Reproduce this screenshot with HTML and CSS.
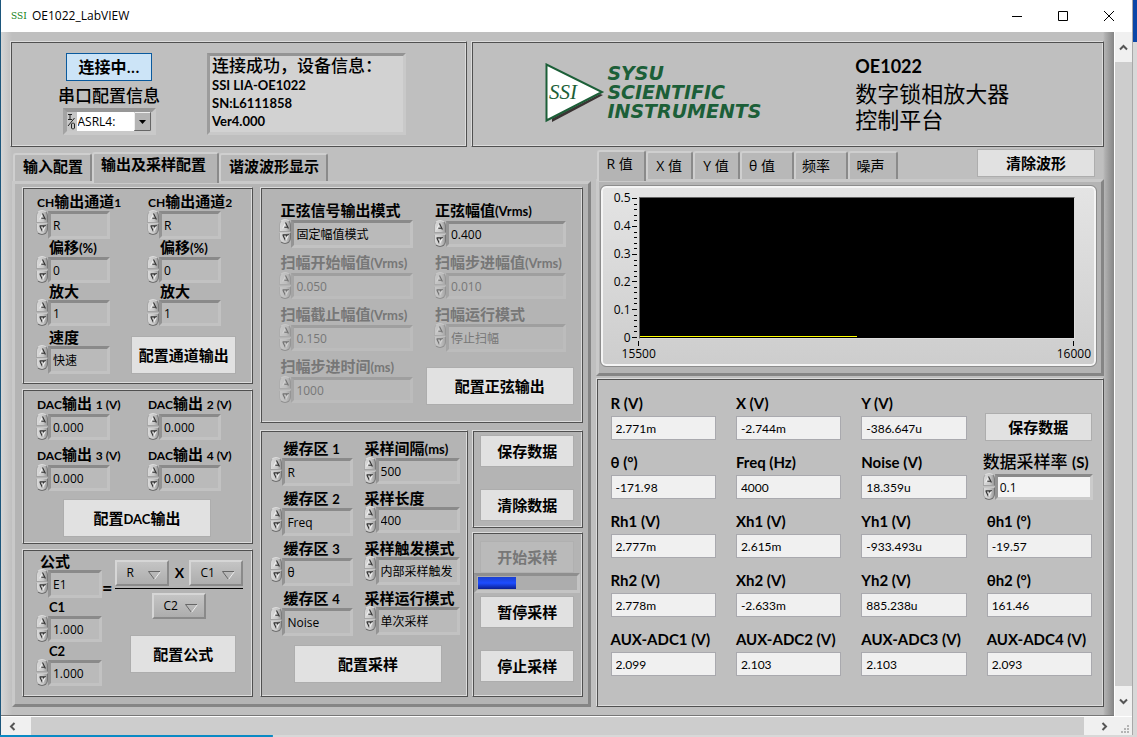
FILE: index.html
```html
<!DOCTYPE html>
<html lang="zh-CN">
<head>
<meta charset="utf-8">
<title>OE1022_LabVIEW</title>
<link rel="stylesheet" href="styles.css">
</head>
<body>
<svg class="defs" aria-hidden="true">
  <symbol id="up" viewBox="0 0 6 6"><path d="M.5 5.500 3 .8" stroke="#eee" fill="none"/><path d="M3 .5 5.500 5.500M2 4.500h3" stroke="#333" fill="none"/></symbol>
  <symbol id="down" viewBox="0 0 6 6"><path d="M.5 .8h5L3.500 2M.8 1 3 5.500" stroke="#333" fill="none"/><path d="M5.500 1 3 5.500" stroke="#eee" fill="none"/></symbol>
</svg>
<div class="desktop">
<div class="window">
  <header class="titlebar">
    <span class="app-icon">SSI</span>
    <span class="app-name">OE1022_LabVIEW</span>
    <button class="win-btn" aria-label="最小化"><svg width="12" height="12"><path d="M1 6.500h10" stroke="#000"/></svg></button>
    <button class="win-btn" aria-label="最大化"><svg width="12" height="12"><path d="M1.500 1.500h9v9h-9z" stroke="#000" fill="none"/></svg></button>
    <button class="win-btn" aria-label="关闭"><svg width="12" height="12"><path d="M1 1l10 10M11 1 1 11" stroke="#000"/></svg></button>
  </header>

  <div class="viewport">
  <main class="pane">
    <div class="top-row">
      <section class="frame connect">
        <div class="port">
          <button class="btn-connect">连接中...</button>
          <label for="port" class="port-label">串口配置信息</label>
          <div class="port-box">
            <svg width="9" height="17" aria-hidden="true"><path d="M1 1.500h4M3 1.500v5M1 6.500h4M7.500 5 1 13M4.500 11v4l1 1h1l1-1v-4l-1-1h-1z" stroke="#222" fill="none"/></svg>
            <select id="port"><option>ASRL4:</option></select>
          </div>
        </div>
        <div class="device-info">
          <p class="info-head">连接成功，设备信息：</p>
          <p>SSI LIA-OE1022</p>
          <p>SN:L6111858</p>
          <p>Ver4.000</p>
        </div>
      </section>
      <section class="frame brand">
        <div class="logo">
          <svg width="60" height="60" viewBox="0 0 60 60" aria-label="SSI">
            <path d="M7 55.500V59l51-27-3-1z" fill="#3a3333"/>
            <path d="M1.500 1.500v56L57 29z" fill="#fff" stroke="#1c5f38" stroke-width="2"/>
            <text x="4" y="36" class="logo-mark">SSI</text>
          </svg>
          <div class="logo-text">SYSU<br>SCIENTIFIC<br>INSTRUMENTS</div>
        </div>
        <div class="product">
          <strong>OE1022</strong>
          <span>数字锁相放大器</span>
          <span>控制平台</span>
        </div>
      </section>
    </div>

    <div class="work">
      <section class="left">
        <div class="tabs" role="tablist">
          <button role="tab" class="tab strong">输入配置</button>
          <button role="tab" class="tab strong active" aria-selected="true">输出及采样配置</button>
          <button role="tab" class="tab strong">谐波波形显示</button>
        </div>
        <div class="panel config">
          <div class="col col-a">
            <section class="frame channel">
              <div class="pair">
                <div class="field enum flush"><label for="ch1"><span>CH</span>输出通道<span>1</span></label><div class="spin"><button aria-label="增加"><svg><use href="#up"/></svg></button><button aria-label="减少"><svg><use href="#down"/></svg></button></div><input id="ch1" value="R"></div>
                <div class="field enum flush"><label for="ch2"><span>CH</span>输出通道<span>2</span></label><div class="spin"><button aria-label="增加"><svg><use href="#up"/></svg></button><button aria-label="减少"><svg><use href="#down"/></svg></button></div><input id="ch2" value="R"></div>
                <div class="field"><label for="off1">偏移<span>(%)</span></label><div class="spin"><button aria-label="增加"><svg><use href="#up"/></svg></button><button aria-label="减少"><svg><use href="#down"/></svg></button></div><input id="off1" value="0"></div>
                <div class="field"><label for="off2">偏移<span>(%)</span></label><div class="spin"><button aria-label="增加"><svg><use href="#up"/></svg></button><button aria-label="减少"><svg><use href="#down"/></svg></button></div><input id="off2" value="0"></div>
                <div class="field"><label for="amp1">放大</label><div class="spin"><button aria-label="增加"><svg><use href="#up"/></svg></button><button aria-label="减少"><svg><use href="#down"/></svg></button></div><input id="amp1" value="1"></div>
                <div class="field"><label for="amp2">放大</label><div class="spin"><button aria-label="增加"><svg><use href="#up"/></svg></button><button aria-label="减少"><svg><use href="#down"/></svg></button></div><input id="amp2" value="1"></div>
              </div>
              <div class="speed">
                <div class="field enum"><label for="speed">速度</label><div class="spin"><button aria-label="增加"><svg><use href="#up"/></svg></button><button aria-label="减少"><svg><use href="#down"/></svg></button></div><input id="speed" value="快速"></div>
                <button class="btn tall">配置通道输出</button>
              </div>
            </section>

            <section class="frame dac">
              <div class="pair">
                <div class="field flush"><label for="dac1"><span>DAC</span>输出 <span>1 (V)</span></label><div class="spin"><button aria-label="增加"><svg><use href="#up"/></svg></button><button aria-label="减少"><svg><use href="#down"/></svg></button></div><input id="dac1" value="0.000"></div>
                <div class="field flush"><label for="dac2"><span>DAC</span>输出 <span>2 (V)</span></label><div class="spin"><button aria-label="增加"><svg><use href="#up"/></svg></button><button aria-label="减少"><svg><use href="#down"/></svg></button></div><input id="dac2" value="0.000"></div>
                <div class="field flush"><label for="dac3"><span>DAC</span>输出 <span>3 (V)</span></label><div class="spin"><button aria-label="增加"><svg><use href="#up"/></svg></button><button aria-label="减少"><svg><use href="#down"/></svg></button></div><input id="dac3" value="0.000"></div>
                <div class="field flush"><label for="dac4"><span>DAC</span>输出 <span>4 (V)</span></label><div class="spin"><button aria-label="增加"><svg><use href="#up"/></svg></button><button aria-label="减少"><svg><use href="#down"/></svg></button></div><input id="dac4" value="0.000"></div>
              </div>
              <button class="btn tall wide">配置<span>DAC</span>输出</button>
            </section>

            <section class="frame formula">
              <div class="terms">
                <div class="field enum flush"><label for="eq">公式</label><div class="spin"><button aria-label="增加"><svg><use href="#up"/></svg></button><button aria-label="减少"><svg><use href="#down"/></svg></button></div><input id="eq" value="E1"></div>
                <div class="field"><label for="c1"><span>C1</span></label><div class="spin"><button aria-label="增加"><svg><use href="#up"/></svg></button><button aria-label="减少"><svg><use href="#down"/></svg></button></div><input id="c1" value="1.000"></div>
                <div class="field"><label for="c2"><span>C2</span></label><div class="spin"><button aria-label="增加"><svg><use href="#up"/></svg></button><button aria-label="减少"><svg><use href="#down"/></svg></button></div><input id="c2" value="1.000"></div>
              </div>
              <div class="expression">
                <div class="equation">
                  <b class="sign equals">=</b>
                  <div class="fraction">
                    <div class="numerator">
                      <select class="ring" aria-label="分子一"><option>R</option></select>
                      <b class="sign">X</b>
                      <select class="ring" aria-label="分子二"><option>C1</option></select>
                    </div>
                    <select class="ring" aria-label="分母"><option>C2</option></select>
                  </div>
                </div>
                <button class="btn tall">配置公式</button>
              </div>
            </section>
          </div>

          <div class="col col-b">
            <section class="frame sine">
              <div class="field enum flush"><label for="s1">正弦信号输出模式</label><div class="spin"><button aria-label="增加"><svg><use href="#up"/></svg></button><button aria-label="减少"><svg><use href="#down"/></svg></button></div><input id="s1" value="固定幅值模式"></div>
              <div class="field flush"><label for="s2">正弦幅值<span>(Vrms)</span></label><div class="spin"><button aria-label="增加"><svg><use href="#up"/></svg></button><button aria-label="减少"><svg><use href="#down"/></svg></button></div><input id="s2" value="0.400"></div>
              <div class="field flush off"><label for="s3">扫幅开始幅值<span>(Vrms)</span></label><div class="spin"><button disabled aria-label="增加"><svg><use href="#up"/></svg></button><button disabled aria-label="减少"><svg><use href="#down"/></svg></button></div><input disabled id="s3" value="0.050"></div>
              <div class="field flush off"><label for="s4">扫幅步进幅值<span>(Vrms)</span></label><div class="spin"><button disabled aria-label="增加"><svg><use href="#up"/></svg></button><button disabled aria-label="减少"><svg><use href="#down"/></svg></button></div><input disabled id="s4" value="0.010"></div>
              <div class="field flush off"><label for="s5">扫幅截止幅值<span>(Vrms)</span></label><div class="spin"><button disabled aria-label="增加"><svg><use href="#up"/></svg></button><button disabled aria-label="减少"><svg><use href="#down"/></svg></button></div><input disabled id="s5" value="0.150"></div>
              <div class="field enum flush off"><label for="s6">扫幅运行模式</label><div class="spin"><button disabled aria-label="增加"><svg><use href="#up"/></svg></button><button disabled aria-label="减少"><svg><use href="#down"/></svg></button></div><input disabled id="s6" value="停止扫幅"></div>
              <div class="field flush off"><label for="s7">扫幅步进时间<span>(ms)</span></label><div class="spin"><button disabled aria-label="增加"><svg><use href="#up"/></svg></button><button disabled aria-label="减少"><svg><use href="#down"/></svg></button></div><input disabled id="s7" value="1000"></div>
              <button class="btn tall wide">配置正弦输出</button>
            </section>

            <div class="lower">
              <section class="frame sampling">
                <div class="sample-grid">
                  <div class="field enum"><label for="b1">缓存区 <span>1</span></label><div class="spin"><button aria-label="增加"><svg><use href="#up"/></svg></button><button aria-label="减少"><svg><use href="#down"/></svg></button></div><input id="b1" value="R"></div>
                  <div class="field flush"><label for="p1">采样间隔<span>(ms)</span></label><div class="spin"><button aria-label="增加"><svg><use href="#up"/></svg></button><button aria-label="减少"><svg><use href="#down"/></svg></button></div><input id="p1" value="500"></div>
                  <div class="field enum"><label for="b2">缓存区 <span>2</span></label><div class="spin"><button aria-label="增加"><svg><use href="#up"/></svg></button><button aria-label="减少"><svg><use href="#down"/></svg></button></div><input id="b2" value="Freq"></div>
                  <div class="field flush"><label for="p2">采样长度</label><div class="spin"><button aria-label="增加"><svg><use href="#up"/></svg></button><button aria-label="减少"><svg><use href="#down"/></svg></button></div><input id="p2" value="400"></div>
                  <div class="field enum"><label for="b3">缓存区 <span>3</span></label><div class="spin"><button aria-label="增加"><svg><use href="#up"/></svg></button><button aria-label="减少"><svg><use href="#down"/></svg></button></div><input id="b3" value="θ"></div>
                  <div class="field enum flush"><label for="p3">采样触发模式</label><div class="spin"><button aria-label="增加"><svg><use href="#up"/></svg></button><button aria-label="减少"><svg><use href="#down"/></svg></button></div><input id="p3" value="内部采样触发"></div>
                  <div class="field enum"><label for="b4">缓存区 <span>4</span></label><div class="spin"><button aria-label="增加"><svg><use href="#up"/></svg></button><button aria-label="减少"><svg><use href="#down"/></svg></button></div><input id="b4" value="Noise"></div>
                  <div class="field enum flush"><label for="p4">采样运行模式</label><div class="spin"><button aria-label="增加"><svg><use href="#up"/></svg></button><button aria-label="减少"><svg><use href="#down"/></svg></button></div><input id="p4" value="单次采样"></div>
                </div>
                <button class="btn tall wide">配置采样</button>
              </section>
              <div class="actions">
                <section class="frame data-actions">
                  <button class="btn">保存数据</button>
                  <button class="btn">清除数据</button>
                </section>
                <section class="frame run-actions">
                  <button class="btn" disabled>开始采样</button>
                  <div class="progress" role="progressbar" aria-label="采样进度" aria-valuenow="39"><div class="progress-fill" style="width:39%"></div></div>
                  <button class="btn pause">暂停采样</button>
                  <button class="btn">停止采样</button>
                </section>
              </div>
            </div>
          </div>
        </div>
      </section>

      <section class="right">
        <div class="tabs" role="tablist">
          <button role="tab" class="tab active" aria-selected="true">R 值</button>
          <button role="tab" class="tab">X 值</button>
          <button role="tab" class="tab">Y 值</button>
          <button role="tab" class="tab wider">θ 值</button>
          <button role="tab" class="tab">频率</button>
          <button role="tab" class="tab">噪声</button>
          <button class="btn clear">清除波形</button>
        </div>
        <div class="panel chart-panel">
          <div class="chart">
            <div class="y-axis"><span>0.5</span><span>0.4</span><span>0.3</span><span>0.2</span><span>0.1</span><span>0</span></div>
            <svg class="ticks" width="6" height="142" aria-hidden="true"><path stroke="#000" d="M0 1.500h5M0 29.500h5M0 57.500h5M0 84.500h5M0 112.500h5M0 140.500h5M2 7.500h3M2 12.500h3M2 18.500h3M2 23.500h3M2 35.500h3M2 40.500h3M2 46.500h3M2 51.500h3M2 63.500h3M2 68.500h3M2 74.500h3M2 79.500h3M2 90.500h3M2 95.500h3M2 101.500h3M2 106.500h3M2 118.500h3M2 123.500h3M2 129.500h3M2 134.500h3"/></svg>
            <div class="plot"><div class="trace"></div></div>
            <div class="x-axis"><span>15500</span><span>16000</span></div>
          </div>
        </div>
        <section class="frame readings">
          <div class="reading"><label for="r1">R (V)</label><input id="r1" readonly value="2.771m"></div>
          <div class="reading"><label for="r2">X (V)</label><input id="r2" readonly value="-2.744m"></div>
          <div class="reading"><label for="r3">Y (V)</label><input id="r3" readonly value="-386.647u"></div>
          <button class="btn save">保存数据</button>
          <div class="reading"><label for="r4">θ (°)</label><input id="r4" readonly value="-171.98"></div>
          <div class="reading"><label for="r5">Freq (Hz)</label><input id="r5" readonly value="4000"></div>
          <div class="reading"><label for="r6">Noise (V)</label><input id="r6" readonly value="18.359u"></div>
          <div class="field rate"><label for="rate">数据采样率 <span>(S)</span></label><div class="spin"><button aria-label="增加"><svg><use href="#up"/></svg></button><button aria-label="减少"><svg><use href="#down"/></svg></button></div><input id="rate" value="0.1"></div>
          <div class="reading"><label for="r7">Rh1 (V)</label><input id="r7" readonly value="2.777m"></div>
          <div class="reading"><label for="r8">Xh1 (V)</label><input id="r8" readonly value="2.615m"></div>
          <div class="reading"><label for="r9">Yh1 (V)</label><input id="r9" readonly value="-933.493u"></div>
          <div class="reading"><label for="r10">θh1 (°)</label><input id="r10" readonly value="-19.57"></div>
          <div class="reading"><label for="r11">Rh2 (V)</label><input id="r11" readonly value="2.778m"></div>
          <div class="reading"><label for="r12">Xh2 (V)</label><input id="r12" readonly value="-2.633m"></div>
          <div class="reading"><label for="r13">Yh2 (V)</label><input id="r13" readonly value="885.238u"></div>
          <div class="reading"><label for="r14">θh2 (°)</label><input id="r14" readonly value="161.46"></div>
          <div class="reading"><label for="r15">AUX-ADC1 (V)</label><input id="r15" readonly value="2.099"></div>
          <div class="reading"><label for="r16">AUX-ADC2 (V)</label><input id="r16" readonly value="2.103"></div>
          <div class="reading"><label for="r17">AUX-ADC3 (V)</label><input id="r17" readonly value="2.103"></div>
          <div class="reading"><label for="r18">AUX-ADC4 (V)</label><input id="r18" readonly value="2.093"></div>
        </section>
      </section>
    </div>
  </main>
  <div class="vscroll">
    <button aria-label="向上滚动"><svg width="9" height="9"><path d="M1 6.500 4.500 3 8 6.500" stroke="#555" stroke-width="2" fill="none"/></svg></button>
    <div class="thumb"></div>
    <button aria-label="向下滚动"><svg width="9" height="9"><path d="M1 2.500 4.500 6 8 2.500" stroke="#555" stroke-width="2" fill="none"/></svg></button>
  </div>
  </div>
  <div class="hscroll">
    <button aria-label="向左滚动"><svg width="9" height="9"><path d="M6.500 1 3 4.500 6.500 8" stroke="#555" stroke-width="2" fill="none"/></svg></button>
    <div class="thumb"></div>
    <button aria-label="向右滚动"><svg width="9" height="9"><path d="M2.500 1 6 4.500 2.500 8" stroke="#555" stroke-width="2" fill="none"/></svg></button>
    <svg class="grip" width="9" height="9" aria-hidden="true"><path fill="#b4b4b4" d="M6 0h2v2h-2zM3 3h2v2h-2zM6 3h2v2h-2zM0 6h2v2h-2zM3 6h2v2h-2zM6 6h2v2h-2z"/></svg>
  </div>
</div>
</div>
</body>
</html>
```
FILE: styles.css
```css
* { box-sizing: border-box; }
body { margin: 0; color: #000; font: 12px/16px "Open Sans", "Noto Sans CJK SC", sans-serif; }
button, input, select { margin: 0; padding: 0; border: 0; border-radius: 0; color: inherit; font: inherit; background: none; appearance: none; }
p { margin: 0; }
.defs { position: absolute; width: 0; height: 0; }

.desktop { display: flex; min-height: 100vh; padding: 0 4px 2px 0;
  background: linear-gradient(#0a8ac4, #0a8ac4) left bottom / 24% 2px no-repeat, linear-gradient(#0a46a8 42px, #d8d8d8 42px); }
.window { flex: 1; display: flex; flex-direction: column; min-width: 0; border-left: 1px solid #1c567c; border-right: 1px solid #a8a8a8; background: #fff; }

.titlebar { display: flex; align-items: center; height: 32px; padding-left: 10px; background: #fff; }
.app-icon { width: 21px; color: #138013; font: 9px/16px "DejaVu Serif", serif; }
.app-name { flex: 1; }
.win-btn { display: grid; place-items: center; width: 46px; height: 32px; }

.viewport { flex: 1; display: flex; }
.pane { flex: 1; display: flex; flex-direction: column; gap: 4px; min-width: 0; padding: 9px 10px 8px 9px; border-bottom: 1px solid #777;
  background: linear-gradient(90deg, #d6d6d6, #bfbfbf 11px, #bfbfbf calc(100% - 11px), #b0b0b0 calc(100% - 9px), #858585); }

.frame { border: 1px solid; border-color: #dcdcdc #505050 #505050 #dcdcdc; box-shadow: inset 1px 1px #505050, inset -1px -1px #dcdcdc; padding: 1px; min-width: 0; }

.top-row { display: grid; grid-template-columns: 457fr 632fr; gap: 4px; height: 106px; }
.connect { display: flex; gap: 46px; padding: 11px 60px 11px 46px; }
.port { display: flex; flex-direction: column; align-items: center; width: 104px; }
.btn-connect { width: 86px; height: 28px; border: 1px solid #0a5a9e; background: #cce4f7; font-size: 16px; font-weight: 600; }
.port-label { font-size: 17px; line-height: 18px; font-weight: 500; margin: 6px 0 3px; white-space: nowrap; }
.port-box { display: flex; align-items: center; gap: 1px; width: 93px; height: 27px; padding-right: 1px; border: 4px solid; border-color: #979797 #c9c9c9 #c9c9c9 #a3a3a3; background: #c6c6c6; }
.port-box svg { flex: none; }
.port-box select { flex: 1; min-width: 0; height: 19px; padding-left: 1px; font-size: 12px;
  background: #fff url("data:image/svg+xml,%3Csvg xmlns='http://www.w3.org/2000/svg' width='17' height='19'%3E%3Cpath fill='%23b4b4b4' stroke='%23666' d='M.5 .5h16v18H.5z'/%3E%3Cpath stroke='%23eee' fill='none' d='M.5 18V.5H16'/%3E%3Cpath d='M5 8h7l-3.500 4z'/%3E%3C/svg%3E") right center no-repeat; }
.device-info { flex: 0 1 199px; height: 82px; padding: 0 2px; border: 3px solid; border-color: #949494 #c9c9c9 #c9c9c9 #9c9c9c; background: #d2d2d2; font: bold 13px/18px Lato, "Noto Sans CJK SC", sans-serif; white-space: nowrap; }
.info-head { font-size: 17px; font-weight: 500; line-height: 20px; }

.brand { display: grid; grid-template-columns: 384fr 248fr; }
.logo { display: flex; align-items: center; gap: 2px; padding: 0 0 3px 72px; }
.logo-mark { font: italic 21px "Liberation Serif", serif; fill: #1c5f38; }
.logo-text { color: #1c5f38; font: italic bold 19px/19px "DejaVu Sans", sans-serif; white-space: nowrap; }
.product { display: flex; flex-direction: column; justify-content: center; padding-bottom: 4px; font: 22px/26px "Noto Sans CJK SC", sans-serif; white-space: nowrap; }
.product strong { font: bold 18px/26px Lato, sans-serif; }

.work { flex: 1; display: grid; grid-template-columns: 580fr 508fr; gap: 5px; }
.left, .right { display: flex; flex-direction: column; min-width: 0; }
.left { padding-left: 2px; }
.tabs { display: flex; align-items: flex-end; height: 30px; padding-left: 1px; }
.tab { height: 28px; padding: 0 8px 3px; border: 2px solid; border-color: #cfcfcf #8a8a8a transparent #cfcfcf; border-bottom: 0; border-radius: 3px 3px 0 0; background: #b8b8b8; font-size: 14px; white-space: nowrap; }
.tab.strong { padding: 0 7px 4px 8px; font-size: 15px; font-weight: 700; }
.tab.active { height: 31px; margin-bottom: -2px; background: #b4b4b4; position: relative; }
.tab.strong.active { padding: 0 11px 9px 7px; }
.right .tabs { height: 28px; }
.right .tab { width: 47px; padding: 0 0 1px; }
.right .tab.active { width: 49px; padding: 0 7px 6px 4px; }
.right .tab.wider, .right .tab:nth-child(5) { width: 54px; padding-right: 9px; }
.right .tab:nth-child(6) { width: 50px; padding-right: 4px; }
.panel { border: 3px solid; border-color: #c9c9c9 #858585 #858585 #c9c9c9; background: #b4b4b4; }
.config { flex: 1; display: grid; grid-template-columns: 232fr 323fr; gap: 7px; padding: 3px 5px 7px 7px; }
.col { display: flex; flex-direction: column; gap: 5px; min-width: 0; }
.col-b { gap: 7px; }

.btn { height: 32px; border: 1px solid #adadad; background: #e1e1e1; font-size: 15px; font-weight: 700; white-space: nowrap; }
.btn.tall { height: 38px; }
.btn.wide { width: 148px; }
.btn:disabled { color: #777; background: #bababa; border-color: #b0b0b0; }
.btn span, .field label span { font-family: Lato, "Open Sans", sans-serif; font-size: 13px; }

.field { display: grid; grid-template-columns: 12px 1fr; align-content: start; min-width: 0; }
.field label { grid-column: 1 / -1; padding-left: 13px; font-size: 15px; line-height: 18px; font-weight: 700; white-space: nowrap; }
.field.flush label { padding-left: 1px; }
.col-a .field label { line-height: 17px; }
.col-a .pair .flush label span { font-size: 12px; }
.field input { width: 100%; min-width: 0; height: 26px; padding-left: 2px; border: 3px solid; border-color: #8a8a8a #c2c2c2 #c2c2c2 #949494; background: #bababa; }
.field.enum input { height: 28px; }
.spin { display: flex; flex-direction: column; gap: 1px; height: 27px; margin-top: -1px; }
.enum .spin { height: 25px; gap: 0; }
.spin button { flex: 1; display: grid; place-items: center; min-height: 0; border: 1px solid; border-color: #dedede #7c7c7c #a4a4a4 #a8a8a8; border-radius: 6px 6px 0 0; background: linear-gradient(90deg, #dadada, #c8c8c8 60%, #9a9a9a); }
.spin button:last-child { border-radius: 0 0 6px 6px; border-color: #c8c8c8 #757575 #707070 #a8a8a8; }
.spin svg { width: 7px; height: 7px; }
.off label, .off input { color: #777; }
.off .spin { opacity: .5; }
.off input { background: #b8b8b8; border-color: #9f9f9f #bcbcbc #bcbcbc #a5a5a5; }

.pair { display: grid; grid-template-columns: 74px 74px; column-gap: 37px; }
.channel { padding: 5px 12px 9px 13px; }
.speed { display: flex; align-items: flex-end; justify-content: space-between; padding: 3px 4px 0 0; }
.speed .field { width: 74px; }
.speed .btn { width: 105px; }
.dac { padding: 5px 12px 6px 13px; }
.dac .pair { row-gap: 6px; }
.dac .field label { margin-bottom: 1px; }
.dac .btn { display: block; margin: 8px 0 0 27px; }
.formula { flex: 1; display: flex; padding: 3px 9px 6px 13px; }
.terms { width: 66px; }
.terms .field.flush label { padding-left: 4px; }
.expression { flex: 1; display: flex; flex-direction: column; align-items: flex-end; gap: 16px; padding-top: 7px; }
.expression .btn { width: 106px; margin-right: 7px; }
.equation { display: flex; gap: 3px; width: 100%; }
.sign { font: bold 16px/16px Lato, sans-serif; }
.equals { padding-top: 20px; font-size: 18px; }
.fraction { flex: 1; display: flex; flex-direction: column; align-items: center; gap: 4px; }
.numerator { display: flex; align-items: center; justify-content: space-between; width: 100%; padding-bottom: 2px; border-bottom: 1px solid #000; }
.ring { width: 54px; height: 26px; padding-left: 9px; border: 2px solid; border-color: #d6d6d6 #8a8a8a #8a8a8a #d6d6d6;
  background: url("data:image/svg+xml,%3Csvg xmlns='http://www.w3.org/2000/svg' width='20' height='11'%3E%3Cpath fill='none' stroke='%23666' d='M13.500 1.500h-12l6 8'/%3E%3Cpath fill='none' stroke='%23eee' d='M13.500 1.500l-6 8'/%3E%3C/svg%3E") right 70% no-repeat, linear-gradient(#c4c4c4, #adadad); }
.numerator .sign { font-size: 14px; }

.sine { display: grid; grid-template-columns: minmax(0, 133fr) minmax(0, 131fr); grid-auto-rows: 52px; column-gap: 21px; height: 236px; padding: 13px 16px 0 18px; }
.sine .field label { margin-bottom: 1px; }
.sine .btn { justify-self: center; margin-top: 10px; }
.lower { flex: 1; display: grid; grid-template-columns: 208fr 111fr; gap: 4px; }
.sampling { padding: 8px 7px 0 9px; display: flex; flex-direction: column; align-items: center; }
.sample-grid { display: grid; grid-template-columns: 82fr 96fr; column-gap: 11px; grid-auto-rows: 50px; width: 100%; }
.sampling .btn { margin: 6px 0 0 6px; }
.actions { display: flex; flex-direction: column; gap: 4px; }
.actions .btn { display: block; width: 94px; }
.data-actions { display: flex; flex-direction: column; justify-content: space-between; align-items: center; height: 98px; padding: 4px 4px 6px; }
.run-actions { flex: 1; display: flex; flex-direction: column; align-items: center; padding: 8px 1px; }
.run-actions .pause { margin: 3px 0 22px; }
.progress { width: 106px; height: 20px; padding: 1px; border: 3px solid; border-color: #8f8f8f #c4c4c4 #c4c4c4 #999; background: #adadad; }
.progress-fill { height: 100%; background: linear-gradient(#1a3fd0, #1d4dff 50%, #0a1f90); }

.clear { width: 118px; height: 28px; margin: 0 9px 2px auto; }
.chart-panel { padding: 4px 5px 7px 2px; height: 197px; }
.chart { display: grid; grid-template-columns: 28px 7px 1fr; grid-template-rows: 142px auto; height: 100%; padding: 9px 19px 0 1px; border: 2px solid #f4f4f4; border-radius: 5px; outline: 1px solid #8c8c8c; background: linear-gradient(#e4e4e4, #cdcdcd); }
.y-axis { display: flex; flex-direction: column; justify-content: space-between; align-items: flex-end; margin: -6px 0; line-height: 14px; padding-right: 1px; }
.plot { display: flex; align-items: flex-end; padding-bottom: 1px; border: 1px solid #666; border-right-color: #ddd; border-bottom-color: #ddd; background: #000; }
.trace { width: 50%; height: 1px; background: #ff0; }
.x-axis { grid-column: 3; display: flex; justify-content: space-between; margin: 2px -16px 0 -17px; }
.x-axis span { display: flex; flex-direction: column; align-items: center; line-height: 16px; }
.x-axis span::before { content: ""; width: 1px; height: 5px; background: #000; }

.readings { flex: 1; display: grid; grid-template-columns: repeat(4, 1fr); grid-auto-rows: 59px; align-content: start; column-gap: 20px; margin-top: 2px; padding: 12px 11px 0 14px; }
.reading { display: flex; flex-direction: column; min-width: 0; }
.reading label { font: bold 15px/25px Lato, "Open Sans", sans-serif; white-space: nowrap; }
.reading input { width: 100%; height: 24px; padding-left: 4px; border: 1px solid #a9a9ae; background: #f0f0f0; font: 12px Lato, sans-serif; }
.readings .save { height: 28px; margin: 22px 0 0 -2px; }
.rate { margin: 0 -1px 0 -4px; }
.rate label { padding: 0; font-size: 17px; line-height: 24px; font-weight: 500; }
.field.rate label span { font-size: 15px; font-weight: 700; }
.rate input { background: #f4f4f4; border-color: #8a8a8a #cbcbcb #cbcbcb #949494; }

.vscroll { display: flex; flex-direction: column; width: 18px; background: #f0f0f0; border-left: 1px solid #fff; }
.vscroll button { height: 30px; display: grid; place-items: center; }
.thumb { flex: 1; background: #cdcdcd; }
.hscroll { display: flex; height: 19px; border-top: 1px solid #fff; background: #f0f0f0; }
.hscroll button { width: 30px; display: grid; place-items: center; padding-right: 8px; }
.hscroll .thumb + button { padding: 0 0 0 10px; }
.grip { align-self: flex-end; margin: 0 2px 1px 7px; }
```
